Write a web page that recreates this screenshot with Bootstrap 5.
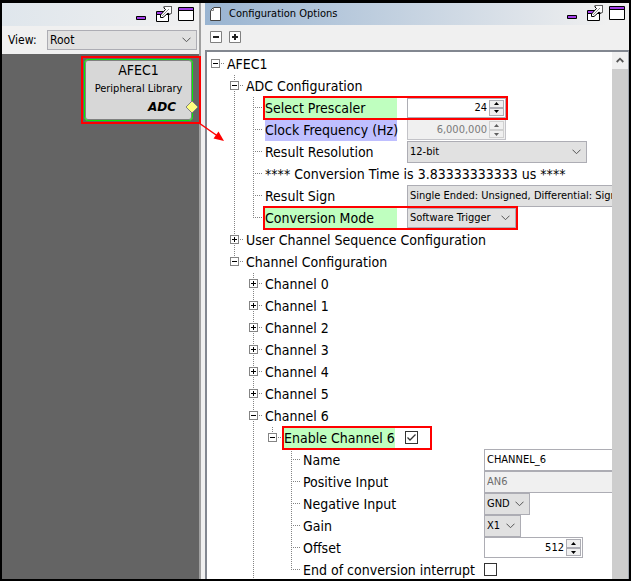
<!DOCTYPE html>
<html lang="en">
<head>
<meta charset="utf-8">
<meta name="viewport" content="width=device-width, initial-scale=1">
<title>Configuration Options</title>
<link href="https://cdn.jsdelivr.net/npm/bootstrap@5.3.0/dist/css/bootstrap.min.css" rel="stylesheet">
<style>
  :root { --ui: "DejaVu Sans Condensed", "DejaVu Sans", sans-serif; --edge: #adadb4; --dot: #848484; }
  body { font-family: var(--ui); font-size: 11px; line-height: 14px; color: #000; background: #f0f0f0; }
  .app { border: 2px solid #000; border-top-width: 3px; }
  svg { display: block; flex: none; }
  .plain-btn { border: 0; padding: 0; background: none; line-height: 0; }

  .side { flex: 0 0 199px; border-right: 2px solid #a0a0a0; }
  .title-left { height: 23px; padding: 0 5px; background: linear-gradient(90deg, #dfe6ec, #f0f0f0); }
  .title-right { height: 22px; padding: 0 4px 0 5px; background: linear-gradient(90deg, #99b4d1, #f0f0f0 95%); }
  .window-btns { gap: 6px; padding-bottom: 1px; }
  .view-bar { height: 28px; padding: 0 2px 0 6px; font-size: 12px; }
  .view-bar label { flex: none; width: 39px; }
  .canvas { background: #646464; }
  .node-frame { left: 79px; right: -2px; top: 2px; height: 68px; border: 2px solid #f00; padding: 1px 6px 1px 1px; }
  .node-box { background: #d7d7d7; border: 1px solid #00f000; border-radius: 4px; box-shadow: inset 0 0 0 1px #808080; padding-top: 2px; }
  .node-name { font-size: 14px; line-height: 16px; }
  .node-kind { line-height: 22px; }
  .node-tag { font-family: "DejaVu Sans", sans-serif; font-size: 12px; line-height: 15px; font-weight: 700; font-style: italic; padding-right: 16px; }
  .port { right: 0; bottom: 8px; }
  .arrow { left: 196px; top: 66px; z-index: 3; }

  .main-pane { margin-left: 4px; }
  .tool-bar { height: 25px; padding: 0 5px; gap: 7px; }
  .tree-pane { border: 2px solid #828790; border-right: 1px solid #a0a5ad; border-bottom: 0; }
  .tree-pane ul { list-style: none; margin: 0; padding: 0 0 0 19px; }
  .tree-pane > .tree-view > ul { padding: 1px 0 0 4px; font-size: 14px; line-height: 22px; }
  .tree-view { flex: 1 1 0; }
  .node-row { display: flex; align-items: center; height: 22px; white-space: nowrap; }
  .tree-view li li:not(:last-child), .tree-view li li.more {
    background: repeating-linear-gradient(180deg, var(--dot) 0 1px, transparent 1px 2px) 4px 0 / 1px 100% no-repeat;
  }
  .tree-view li li:last-child:not(.more) > .node-row {
    background: repeating-linear-gradient(180deg, var(--dot) 0 1px, transparent 1px 2px) 4px 0 / 1px 12px no-repeat;
  }
  .toggle { flex: none; width: 9px; height: 9px; border: 1px solid #848484; padding: 0;
    background: linear-gradient(#000, #000) center / 5px 1px no-repeat #fff; }
  .toggle.plus { background: linear-gradient(#000, #000) center / 5px 1px no-repeat, linear-gradient(#000, #000) center / 1px 5px no-repeat #fff; }
  .stub { flex: none; width: 5px; height: 1px; margin-right: 2px; background: repeating-linear-gradient(90deg, transparent 0 1px, var(--dot) 1px 2px); }
  .stub.leaf { width: 10px; margin-left: 4px; background: repeating-linear-gradient(90deg, var(--dot) 0 1px, transparent 1px 2px); }
  .cap { flex: none; }
  .cap-opt { width: 132px; margin-right: 10px; }
  .cap-chan { width: 111px; margin-right: 10px; }
  .cap-prop { width: 171px; margin-right: 10px; }
  .hl-green { background: #bfffbf; }
  .hl-blue { background: #bfbfff; }
  .callout { display: flex; align-items: center; flex: none; height: 24px; margin: 0 -2px; border: 2px solid #f00; position: relative; z-index: 1; background: #fff; }
  .callout .cap { line-height: 20px; }
  .callout .field, .callout .spin { height: 20px; }

  .field { flex: none; font: 11px/14px var(--ui); height: 22px; min-height: 0; border: 1px solid var(--edge); border-radius: 0; padding: 0 2px; color: #000; background-color: #fff; }
  select.field { padding: 0 18px 0 2px; background-color: #e1e1e1;
    background-image: url("data:image/svg+xml,%3csvg xmlns='http://www.w3.org/2000/svg' viewBox='0 0 9 6'%3e%3cpath d='M.5 .7l4 4 4-4' fill='none' stroke='%23555'/%3e%3c/svg%3e");
    background-size: 9px 6px; background-position: right 5px center; }
  .field:disabled { background-color: #f0f0f0; color: #6d6d6d; }
  select.w-view { height: 20px; font-size: 12px; }
  .w-res { width: 180px; }
  .w-long { width: 300px; }
  .w-mode { width: 109px; }
  .w-gnd { width: 46px; }
  .w-x { width: 37px; }
  .spin { display: flex; flex: none; width: 99px; height: 21px; padding: 1px; border: 1px solid var(--edge); background: #fff; }
  .spin input { flex: 1 1 0; min-width: 0; border: 0; padding: 0 2px; text-align: right; background: transparent; font: 11px/14px var(--ui); color: #000; }
  .spin button { flex: 1 1 0; width: 15px; border: 1px solid var(--edge); padding: 0; background: #f0f0f0; display: flex; align-items: center; justify-content: center; }
  .spin.off { background: #f0f0f0; border-color: #c3c3c8; }
  .spin.off input { color: #7a7a7a; }
  .spin.off button { border-color: #d0d0d0; }
  .spin.off svg { opacity: .6; }
  .tick { appearance: none; flex: none; margin: 0; width: 13px; height: 13px; border: 1px solid #333; background: #fff; border-radius: 0; }
  .tick:checked { background: url("data:image/svg+xml,%3csvg xmlns='http://www.w3.org/2000/svg' viewBox='0 0 11 11'%3e%3cpath d='M1.5 5.5l2.500 2.500 5.500-5.500' fill='none' stroke='%23333' stroke-width='1.300'/%3e%3c/svg%3e") center / 11px 11px no-repeat #fff; }
  .scroller { flex: 0 0 16px; background: #cdcdcd; }
  .scroller button { height: 17px; background: #f0f0f0; }
</style>
<script src="https://cdn.jsdelivr.net/npm/bootstrap@5.3.0/dist/js/bootstrap.bundle.min.js"></script>
</head>
<body>
<svg width="0" height="0" class="position-absolute" aria-hidden="true">
  <symbol id="i-min" viewBox="0 0 10 16"><path d="M.5 10.500h9v3h-9z" fill="#a33ee8" stroke="#000"/></symbol>
  <symbol id="i-pop" viewBox="0 0 16 16"><path d="M.5 5.500h12v10h-12z" fill="#fff" stroke="#000"/><path d="M1 6h11v2H1z" fill="#a33ee8"/><path d="M1 8.500h11" stroke="#000"/><path d="M8 .5h7.500V7l-1.500 1.500-2-1.500-5 4.500H4.500V9l5-5.500L8 2z" fill="#fff" stroke="#000"/><path d="M6 10l7-7M8 .5h7.500V7" stroke="#777" fill="none" stroke-width=".8"/></symbol>
  <symbol id="i-max" viewBox="0 0 16 16"><path d="M.5 1.500h15v13h-15z" fill="#fff" stroke="#000"/><path d="M1 2h14v2H1z" fill="#a33ee8"/><path d="M1 4.500h14" stroke="#000"/></symbol>
  <symbol id="i-up" viewBox="0 0 5 3"><path d="M0 3L2.500 0 5 3z"/></symbol>
  <symbol id="i-down" viewBox="0 0 5 3"><path d="M0 0l2.500 3L5 0z"/></symbol>
</svg>

<div class="app d-flex vh-100 overflow-hidden">
  <aside class="side d-flex flex-column position-relative">
    <div class="title-left d-flex justify-content-end align-items-center">
      <div class="window-btns d-flex">
        <button class="plain-btn" aria-label="Minimize"><svg width="10" height="16"><use href="#i-min"/></svg></button>
        <button class="plain-btn ms-1" aria-label="Float"><svg width="16" height="16"><use href="#i-pop"/></svg></button>
        <button class="plain-btn" aria-label="Maximize"><svg width="16" height="16"><use href="#i-max"/></svg></button>
      </div>
    </div>
    <div class="view-bar d-flex align-items-center">
      <label for="view">View:</label>
      <select id="view" class="form-select field w-view flex-fill w-auto"><option>Root</option></select>
    </div>
    <div class="canvas flex-fill position-relative">
      <div class="node-frame position-absolute">
        <div class="node-box h-100 text-center">
          <div class="node-name">AFEC1</div>
          <div class="node-kind">Peripheral Library</div>
          <div class="node-tag text-end">ADC</div>
        </div>
        <svg class="port position-absolute" width="14" height="14"><path d="M7 1l6 6-6 6-6-6z" fill="#ffff80" stroke="#808080"/></svg>
      </div>
      <svg class="arrow position-absolute" width="28" height="24"><path d="M1 3l20 14" stroke="#f00" stroke-width="1.500"/><path d="M26 21l-10.500-2.500 5-7z" fill="#f00"/></svg>
    </div>
  </aside>

  <main class="main-pane d-flex flex-column flex-fill overflow-hidden">
    <div class="title-right d-flex align-items-center">
      <svg width="11" height="14"><path d="M3.500 .5h7v13H.5v-10z" fill="#fff" stroke="#444"/><path d="M.5 3.500h3v-3" fill="none" stroke="#888"/></svg>
      <span class="ms-1 ps-1 me-auto">Configuration Options</span>
      <div class="window-btns d-flex">
        <button class="plain-btn" aria-label="Minimize"><svg width="10" height="16"><use href="#i-min"/></svg></button>
        <button class="plain-btn ms-1" aria-label="Float"><svg width="16" height="16"><use href="#i-pop"/></svg></button>
        <button class="plain-btn" aria-label="Maximize"><svg width="16" height="16"><use href="#i-max"/></svg></button>
      </div>
    </div>
    <div class="tool-bar d-flex align-items-center">
      <button class="plain-btn" aria-label="Collapse all"><svg width="12" height="12"><path d="M.5 .5h11v11H.5z" fill="#fff" stroke="#808080"/><path d="M3 6h6" stroke="#222" stroke-width="2"/></svg></button>
      <button class="plain-btn" aria-label="Expand all"><svg width="12" height="12"><path d="M.5 .5h11v11H.5z" fill="#fff" stroke="#808080"/><path d="M3 6h6M6 3v6" stroke="#222" stroke-width="2"/></svg></button>
    </div>
    <div class="tree-pane d-flex flex-fill bg-white overflow-hidden">
      <div class="tree-view overflow-hidden">
        <ul>
          <li>
            <div class="node-row"><button class="toggle" aria-label="Collapse"></button><span class="stub"></span><span>AFEC1</span></div>
            <ul>
              <li>
                <div class="node-row"><button class="toggle" aria-label="Collapse"></button><span class="stub"></span><span>ADC Configuration</span></div>
                <ul>
                  <li><div class="node-row"><span class="stub leaf"></span><div class="callout"><label class="cap cap-opt hl-green" for="prescaler">Select Prescaler</label>
                    <div class="spin"><input id="prescaler" value="24"><div class="d-flex flex-column"><button aria-label="Increase"><svg width="5" height="3"><use href="#i-up"/></svg></button><button aria-label="Decrease"><svg width="5" height="3"><use href="#i-down"/></svg></button></div></div></div></div></li>
                  <li><div class="node-row"><span class="stub leaf"></span><label class="cap cap-opt hl-blue" for="clock">Clock Frequency (Hz)</label>
                    <div class="spin off"><input id="clock" value="6,000,000" disabled><div class="d-flex flex-column"><button disabled aria-label="Increase"><svg width="5" height="3"><use href="#i-up"/></svg></button><button disabled aria-label="Decrease"><svg width="5" height="3"><use href="#i-down"/></svg></button></div></div></div></li>
                  <li><div class="node-row"><span class="stub leaf"></span><label class="cap cap-opt" for="resolution">Result Resolution</label><select id="resolution" class="form-select field w-res"><option>12-bit</option></select></div></li>
                  <li><div class="node-row"><span class="stub leaf"></span><span>**** Conversion Time is 3.83333333333 us ****</span></div></li>
                  <li><div class="node-row"><span class="stub leaf"></span><label class="cap cap-opt" for="sign">Result Sign</label><select id="sign" class="form-select field w-long"><option>Single Ended: Unsigned, Differential: Signed</option></select></div></li>
                  <li><div class="node-row"><span class="stub leaf"></span><div class="callout"><label class="cap cap-opt hl-green" for="mode">Conversion Mode</label><select id="mode" class="form-select field w-mode"><option>Software Trigger</option></select></div></div></li>
                </ul>
              </li>
              <li><div class="node-row"><button class="toggle plus" aria-label="Expand"></button><span class="stub"></span><span>User Channel Sequence Configuration</span></div></li>
              <li>
                <div class="node-row"><button class="toggle" aria-label="Collapse"></button><span class="stub"></span><span>Channel Configuration</span></div>
                <ul>
                  <li><div class="node-row"><button class="toggle plus" aria-label="Expand"></button><span class="stub"></span><span>Channel 0</span></div></li>
                  <li><div class="node-row"><button class="toggle plus" aria-label="Expand"></button><span class="stub"></span><span>Channel 1</span></div></li>
                  <li><div class="node-row"><button class="toggle plus" aria-label="Expand"></button><span class="stub"></span><span>Channel 2</span></div></li>
                  <li><div class="node-row"><button class="toggle plus" aria-label="Expand"></button><span class="stub"></span><span>Channel 3</span></div></li>
                  <li><div class="node-row"><button class="toggle plus" aria-label="Expand"></button><span class="stub"></span><span>Channel 4</span></div></li>
                  <li><div class="node-row"><button class="toggle plus" aria-label="Expand"></button><span class="stub"></span><span>Channel 5</span></div></li>
                  <li class="more">
                    <div class="node-row"><button class="toggle" aria-label="Collapse"></button><span class="stub"></span><span>Channel 6</span></div>
                    <ul>
                      <li>
                        <div class="node-row"><button class="toggle" aria-label="Collapse"></button><span class="stub"></span><div class="callout pe-2"><label class="cap cap-chan hl-green" for="enable6">Enable Channel 6</label><input id="enable6" type="checkbox" class="tick me-1" checked></div></div>
                        <ul>
                          <li><div class="node-row"><span class="stub leaf"></span><label class="cap cap-prop" for="ch-name">Name</label><input id="ch-name" class="field w-long" value="CHANNEL_6"></div></li>
                          <li><div class="node-row"><span class="stub leaf"></span><label class="cap cap-prop" for="ch-pos">Positive Input</label><input id="ch-pos" class="field w-long" value="AN6" disabled></div></li>
                          <li><div class="node-row"><span class="stub leaf"></span><label class="cap cap-prop" for="ch-neg">Negative Input</label><select id="ch-neg" class="form-select field w-gnd"><option>GND</option></select></div></li>
                          <li><div class="node-row"><span class="stub leaf"></span><label class="cap cap-prop" for="ch-gain">Gain</label><select id="ch-gain" class="form-select field w-x"><option>X1</option></select></div></li>
                          <li><div class="node-row"><span class="stub leaf"></span><label class="cap cap-prop" for="ch-off">Offset</label>
                            <div class="spin"><input id="ch-off" value="512"><div class="d-flex flex-column"><button aria-label="Increase"><svg width="5" height="3"><use href="#i-up"/></svg></button><button aria-label="Decrease"><svg width="5" height="3"><use href="#i-down"/></svg></button></div></div></div></li>
                          <li><div class="node-row"><span class="stub leaf"></span><label class="cap cap-prop" for="ch-int">End of conversion interrupt</label><input id="ch-int" type="checkbox" class="tick"></div></li>
                        </ul>
                      </li>
                    </ul>
                  </li>
                </ul>
              </li>
            </ul>
          </li>
        </ul>
      </div>
      <div class="scroller">
        <button class="plain-btn w-100 d-flex align-items-center justify-content-center" aria-label="Scroll up"><svg width="8" height="6"><path d="M.7 5L4 1.700 7.300 5" fill="none" stroke="#555" stroke-width="1.800"/></svg></button>
      </div>
    </div>
  </main>
</div>
</body>
</html>
